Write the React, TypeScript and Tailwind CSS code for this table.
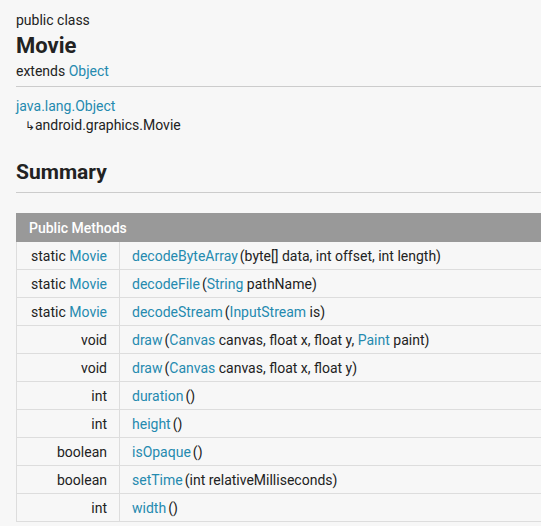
const methods: { ret: [string, boolean][]; name: string; args: [string, boolean][] }[] = [
  { ret: [['static ', false], ['Movie', true]], name: 'decodeByteArray', args: [['(byte[] data, int offset, int length)', false]] },
  { ret: [['static ', false], ['Movie', true]], name: 'decodeFile', args: [['(', false], ['String', true], [' pathName)', false]] },
  { ret: [['static ', false], ['Movie', true]], name: 'decodeStream', args: [['(', false], ['InputStream', true], [' is)', false]] },
  { ret: [['void', false]], name: 'draw', args: [['(', false], ['Canvas', true], [' canvas, float x, float y, ', false], ['Paint', true], [' paint)', false]] },
  { ret: [['void', false]], name: 'draw', args: [['(', false], ['Canvas', true], [' canvas, float x, float y)', false]] },
  { ret: [['int', false]], name: 'duration', args: [['()', false]] },
  { ret: [['int', false]], name: 'height', args: [['()', false]] },
  { ret: [['boolean', false]], name: 'isOpaque', args: [['()', false]] },
  { ret: [['boolean', false]], name: 'setTime', args: [['(int relativeMilliseconds)', false]] },
  { ret: [['int', false]], name: 'width', args: [['()', false]] },
]

function Parts({ parts }: { parts: [string, boolean][] }) {
  return (
    <>
      {parts.map(([t, link], i) =>
        link ? <a key={i} className="text-[#258aaf]">{t}</a> : <span key={i}>{t}</span>
      )}
    </>
  )
}

export default function App() {
  return (
    <div
      className="w-[541px] h-[526px] overflow-hidden bg-[#f7f7f7] text-[#222] text-[14px]"
      style={{ fontFamily: 'Roboto, "Liberation Sans", sans-serif' }}
    >
      <div className="pl-[16px] pt-[10px]">
        <div className="leading-[20px]">public class</div>
        <h1 className="text-[22px] font-bold leading-[31px]">Movie</h1>
        <div className="leading-[20px]">
          extends <a className="text-[#258aaf]">Object</a>
        </div>
        <hr className="mt-[5px] border-0 border-t border-[#ccc]" />

        <div className="mt-[9px] leading-[20px] text-[#258aaf]">java.lang.Object</div>
        <div className="leading-[19px] pl-[9px]">
          <span className="text-[12px]">↳</span>android.graphics.Movie
        </div>

        {/* summary */}
        <h2 className="mt-[20px] text-[21px] font-bold leading-[32px]">Summary</h2>
        <hr className="mt-[4px] border-0 border-t border-[#ccc]" />

        <table className="mt-[20px] w-[700px] border-collapse">
          <thead>
            <tr>
              <th
                colSpan={2}
                className="h-[28px] bg-[#999] border border-[#999] text-left text-white font-medium px-[12px] leading-[20px]"
              >
                Public Methods
              </th>
            </tr>
          </thead>
          <tbody>
            {methods.map((m, i) => (
              <tr key={i}>
                <td className="w-[103px] h-[28px] border border-[#ddd] text-right pr-[12px] leading-[20px] whitespace-nowrap">
                  <Parts parts={m.ret} />
                </td>
                <td className="h-[28px] border border-[#ddd] pl-[12px] leading-[20px] whitespace-nowrap">
                  <a className="text-[#258aaf]">{m.name}</a>
                  <span className="ml-[2px]">
                    <Parts parts={m.args} />
                  </span>
                </td>
              </tr>
            ))}
          </tbody>
        </table>
      </div>
    </div>
  )
}
